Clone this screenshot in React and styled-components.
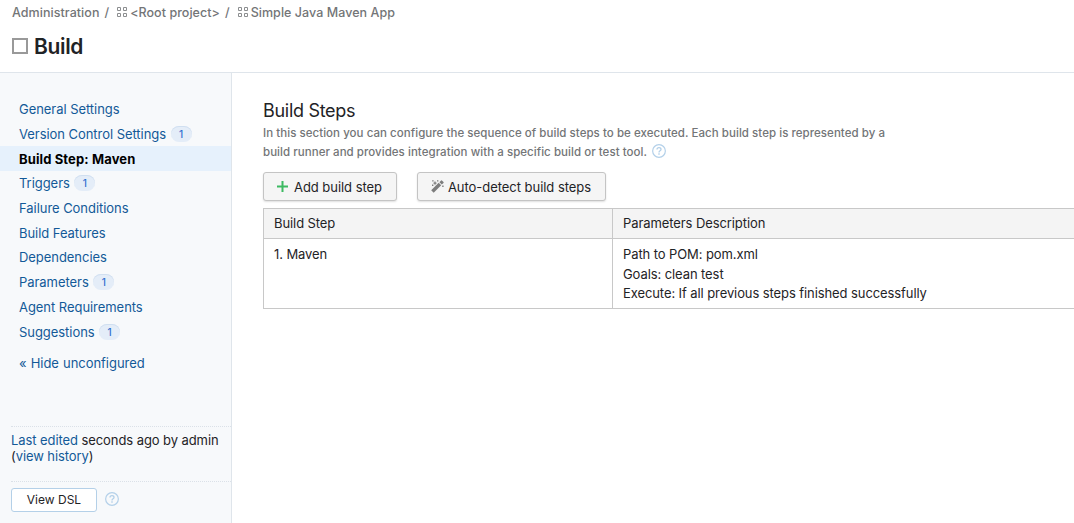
import React from "react";
import styled, { createGlobalStyle } from "styled-components";

const GlobalStyle = createGlobalStyle`
  * { box-sizing: border-box; }
  body {
    margin: 0;
    overflow: hidden;
    background: #fff;
    color: #1f2326;
    font: 13px/20px Inter, "Liberation Sans", sans-serif;
    letter-spacing: -0.04px;
  }
`;

const Page = styled.div`
  display: flex;
  flex-direction: column;
  height: 523px;
  overflow: hidden;
`;

const Header = styled.header`
  flex: none;
  height: 73px;
  padding: 3px 12px 0;
  border-bottom: 1px solid #dfe5eb;
`;

const Breadcrumbs = styled.nav`
  display: flex;
  align-items: center;
  height: 20px;
  color: #737577;
  font-size: 12.5px;
  font-weight: 500;
  letter-spacing: 0.05px;
  white-space: pre;
`;

const Slash = styled.span`
  margin: 0 8px 0 5px;
`;

const ProjectIcon = styled.svg`
  flex: none;
  width: 10px;
  height: 10px;
  margin: -2px 3px 0 0;
`;

const TitleRow = styled.div`
  display: flex;
  align-items: center;
  height: 28px;
  margin-top: 9px;
`;

const ConfigIcon = styled.span`
  width: 16px;
  height: 16px;
  margin-right: 6px;
  border: 2px solid #999;
`;

const Title = styled.h1`
  margin: 0;
  padding-top: 2px;
  font-size: 21px;
  line-height: 28px;
  font-weight: 600;
  letter-spacing: -0.35px;
`;

const Body = styled.div`
  display: flex;
  flex: 1;
  min-height: 0;
`;

const Sidebar = styled.aside`
  display: flex;
  flex-direction: column;
  flex: none;
  width: 232px;
  padding-top: 23.6px;
  border-right: 1px solid #dfe5eb;
  background: #f7f9fb;
`;

const NavItem = styled.a`
  display: flex;
  align-items: center;
  height: 24.75px;
  padding: ${(p) => (p.$active ? "1px" : 0)} 0 0 19px;
  color: ${(p) => (p.$active ? "#000" : "#135998")};
  background: ${(p) => (p.$active ? "#e6f1fc" : "transparent")};
  font-weight: ${(p) => (p.$active ? 700 : 400)};
  letter-spacing: ${(p) => (p.$active ? 0.12 : -0.05)}px;
`;

const Count = styled.span`
  width: 21px;
  height: 16px;
  margin-left: 4.5px;
  border-radius: 8px;
  background: #e4edf8;
  box-shadow: inset 0 1px 0 #d0dff0;
  color: #2f6fd0;
  font-size: 10px;
  line-height: 16px;
  font-weight: 500;
  text-align: center;
`;

const Toggle = styled(NavItem)`
  margin-top: 6.4px;
  word-spacing: 0.6px;
`;

const Footer = styled.div`
  margin: auto 0 0 11px;
`;

const FooterBlock = styled.div`
  height: ${(p) => p.$height}px;
  padding-top: ${(p) => p.$pad}px;
  border-top: 1px dotted #dbe1e8;
  line-height: 16px;
  letter-spacing: -0.08px;
`;

const Link = styled.a`
  color: #135998;
`;

const DslRow = styled(FooterBlock)`
  display: flex;
  align-items: flex-start;
`;

const DslButton = styled.button`
  width: 86px;
  height: 24px;
  margin: 0 8px 0 0;
  padding: 0;
  border: 1px solid #b4d0e8;
  border-radius: 3px;
  background: #fff;
  color: #1f2326;
  font: 12px/20px Inter, sans-serif;
`;

const HelpSvg = styled.svg`
  width: 14px;
  height: 14px;
  margin: ${(p) => p.$margin};
  vertical-align: top;
`;

const Main = styled.main`
  flex: 1;
  min-width: 0;
  padding: 26px 0 0 31px;
`;

const SectionTitle = styled.h2`
  margin: 0;
  font-size: 18px;
  line-height: 24px;
  font-weight: 400;
  letter-spacing: -0.3px;
`;

const Description = styled.p`
  width: 640px;
  margin: 1px 0 0;
  color: #737577;
  font-size: 11.5px;
  font-weight: 500;
  line-height: 19px;
  letter-spacing: 0.045px;
  white-space: nowrap;
`;

const Actions = styled.div`
  display: flex;
  gap: 20px;
  margin: 10px 0 7px;
`;

const ActionButton = styled.button`
  display: flex;
  align-items: center;
  justify-content: center;
  gap: ${(p) => p.$gap}px;
  width: ${(p) => p.$width}px;
  height: 29px;
  padding: 0 1px 0 0;
  border: 1px solid #c4c4c4;
  border-radius: 3px;
  background: #f5f5f5;
  box-shadow: 0 1px 2px rgba(0, 0, 0, 0.13);
  color: #1f2326;
  font: 13px/20px Inter, sans-serif;
  letter-spacing: -0.04px;
  white-space: nowrap;
`;

const StepsTable = styled.table`
  width: 900px;
  border-collapse: collapse;
  table-layout: fixed;
  letter-spacing: -0.09px;
`;

const HeadCell = styled.th`
  width: ${(p) => p.$width};
  height: 30px;
  padding: 0 10px 2px;
  border: 1px solid #c8c8c8;
  background: #f4f4f4;
  font-weight: 400;
  text-align: left;
`;

const Cell = styled.td`
  height: 70px;
  padding: 6px 10px 0;
  border: 1px solid #c8c8c8;
  line-height: 19.5px;
  vertical-align: top;
`;

function Project() {
  return (
    <ProjectIcon viewBox="0 0 10 10" fill="none" stroke="#8c8e90">
      <path d="M.5.5h3v3h-3zM6.5.5h3v3h-3zM.5 6.5h3v3h-3zM6.5 6.5h3v3h-3z" />
    </ProjectIcon>
  );
}

function Help({ margin }) {
  return (
    <HelpSvg viewBox="0 0 14 14" fill="none" stroke="#b3d0e9" $margin={margin}>
      <circle cx="7" cy="7" r="6.35" strokeWidth="1.2" />
      <path d="M5 5.6C5 4.4 5.8 3.7 7 3.7s2 .7 2 1.7c0 1.4-2 1.5-2 3" strokeWidth="1.3" />
      <path d="M7 9.3v1.4" strokeWidth="1.4" />
    </HelpSvg>
  );
}

const Plus = () => (
  <svg width="11" height="11" viewBox="0 0 11 11" stroke="#3dba62" strokeWidth="2">
    <path d="M5.5 0v11M0 5.5h11" />
  </svg>
);

const Wand = () => (
  <svg width="13" height="13" viewBox="0 0 13 13" fill="#7d7d7d">
    <path d="M.2 10.3 7.7 2.8l2.5 2.5-7.5 7.5z" />
    <path d="M8.4 2.2 10.1.5q.4-.4.8 0l1.6 1.6q.4.4 0 .8l-1.7 1.7z" />
    <path d="m4 .8.7 1.6 1.6.7-1.6.7L4 5.4l-.7-1.6-1.6-.7 1.6-.7z" />
    <path d="M1.2.2h1.4v1.4H1.2zM6 .2h1.4v1.4H6zM1 4.6h1.4V6H1zM11.2 5.6h1.4V7h-1.4z" />
  </svg>
);

const items = [
  ["General Settings"],
  ["Version Control Settings", 1],
  ["Build Step: Maven"],
  ["Triggers", 1],
  ["Failure Conditions"],
  ["Build Features"],
  ["Dependencies"],
  ["Parameters", 1],
  ["Agent Requirements"],
  ["Suggestions", 1],
];

export default function App() {
  return (
    <Page>
      <GlobalStyle />
      <Header>
        <Breadcrumbs>
          <span>Administration</span>
          <Slash>/</Slash>
          <Project />
          <span>&lt;Root project&gt;</span>
          <Slash>/</Slash>
          <Project />
          <span>Simple Java Maven App</span>
        </Breadcrumbs>
        <TitleRow>
          <ConfigIcon />
          <Title>Build</Title>
        </TitleRow>
      </Header>
      <Body>
        <Sidebar>
          {items.map(([label, count]) => (
            <NavItem key={label} $active={label === "Build Step: Maven"}>
              {label}
              {count && <Count>{count}</Count>}
            </NavItem>
          ))}
          <Toggle>« Hide unconfigured</Toggle>
          <Footer>
            <FooterBlock $height={55} $pad={5}>
              <Link>Last edited</Link> seconds ago by admin
              <br />(<Link>view history</Link>)
            </FooterBlock>
            <DslRow $height={42} $pad={6}>
              <DslButton>View DSL</DslButton>
              <Help margin="4px 0 0" />
            </DslRow>
          </Footer>
        </Sidebar>
        <Main>
          <SectionTitle>Build Steps</SectionTitle>
          <Description>
            In this section you can configure the sequence of build steps to be executed. Each build step is represented by a
            <br />
            build runner and provides integration with a specific build or test tool.
            <Help margin="1px 0 0 5px" />
          </Description>
          <Actions>
            <ActionButton $width={134} $gap={6}>
              <Plus />
              Add build step
            </ActionButton>
            <ActionButton $width={189} $gap={4}>
              <Wand />
              Auto-detect build steps
            </ActionButton>
          </Actions>
          <StepsTable>
            <thead>
              <tr>
                <HeadCell $width="349px">Build Step</HeadCell>
                <HeadCell>Parameters Description</HeadCell>
              </tr>
            </thead>
            <tbody>
              <tr>
                <Cell>1. Maven</Cell>
                <Cell>
                  Path to POM: pom.xml
                  <br />
                  Goals: clean test
                  <br />
                  Execute: If all previous steps finished successfully
                </Cell>
              </tr>
            </tbody>
          </StepsTable>
        </Main>
      </Body>
    </Page>
  );
}
